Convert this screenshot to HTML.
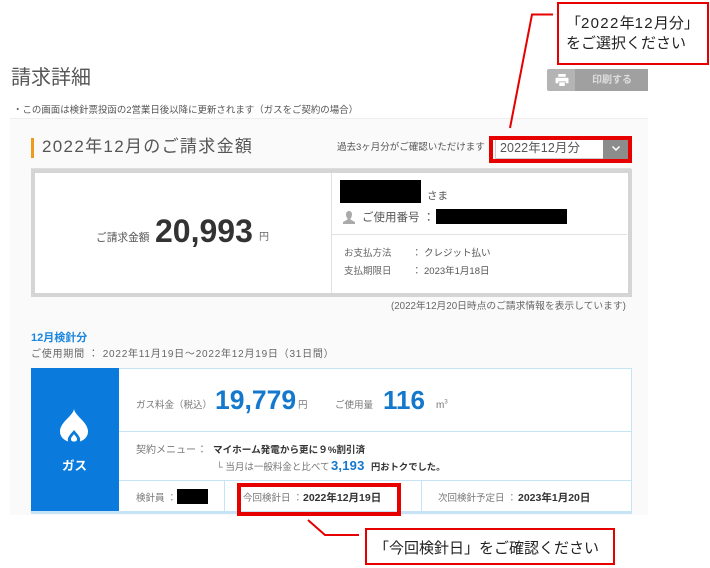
<!DOCTYPE html>
<html lang="ja"><head><meta charset="utf-8">
<style>
html,body{margin:0;padding:0;background:#fff}
#p{position:relative;width:710px;height:568px;overflow:hidden;background:#fff;font-family:"Liberation Sans","Noto Sans CJK JP",sans-serif;color:#666;filter:blur(.35px)}
#p div{position:absolute}
.t{position:absolute;white-space:nowrap;line-height:1}
.b{font-weight:bold;color:#333}
.blue{color:#1478cc;font-weight:bold}
.k{background:#000}
.r{border:4px solid #e60000;box-sizing:border-box}
.c{background:#fff;border:2px solid #e60000;box-sizing:border-box}
.lb{background:#c6e3f8}
</style></head><body><div id="p">
<div class="t" style="left:11px;top:68px;font-size:20px;color:#555">請求詳細</div>
<div class="t" style="left:13px;top:106px;font-size:9.450px;color:#555">・この画面は検針票投函の2営業日後以降に更新されます（ガスをご契約の場合）</div>

<div style="left:547px;top:69px;width:28px;height:22px;background:#b4b4b4;border-radius:2px 0 0 2px"></div>
<div style="left:575px;top:69px;width:73px;height:22px;background:#a0a0a0"></div>
<svg style="position:absolute;left:555px;top:74px" width="14" height="12" viewBox="0 0 14 13"><path fill="#fff" d="M3 0h8v3H3zM1 4h12a1 1 0 0 1 1 1v5h-3V8H3v2H0V5a1 1 0 0 1 1-1zM4 9h6v4H4z"/></svg>
<div class="t" style="left:592px;top:76px;font-size:10px;font-weight:bold;color:#ddd">印刷する</div>

<div style="left:10px;top:118px;width:638px;height:397px;background:#fafafa;border-top:1px solid #eee;box-sizing:border-box"></div>
<div style="left:31px;top:138px;width:3px;height:20px;background:#ee9a1c"></div>
<div class="t" style="left:42px;top:138px;font-size:17px;color:#555;letter-spacing:1.32px">2022年12月のご請求金額</div>
<div style="left:31px;top:168px;width:600px;height:1px;background:#ddd"></div>
<div class="t" style="left:337px;top:143px;font-size:9.500px;color:#555">過去3ヶ月分がご確認いただけます</div>

<div style="left:495px;top:139px;width:133px;height:20px;background:#fff;border:1px solid #ccc;box-sizing:border-box"></div>
<div style="left:603px;top:139px;width:25px;height:20px;background:#8c8c8c"></div>
<svg style="position:absolute;left:611px;top:145px" width="10" height="8" viewBox="0 0 10 8"><path fill="none" stroke="#fff" stroke-width="1.5" d="M1.500 1.500L5 5l3.500-3.500"/></svg>
<div class="t" style="left:500px;top:142px;font-size:12.500px;color:#555;letter-spacing:.1px">2022年12月分</div>

<div style="left:31px;top:169px;width:601px;height:128px;background:#fff;border:4px solid #d5d5d5;box-sizing:border-box"></div>
<div style="left:331px;top:173px;width:1px;height:120px;background:#e2e2e2"></div>
<div style="left:331px;top:234px;width:296px;height:1px;background:#e2e2e2"></div>
<div class="t" style="left:96px;top:233px;font-size:10.700px;color:#555">ご請求金額</div>
<div class="t" style="left:155px;top:215px;font-size:32px;font-weight:bold;color:#333">20,993</div>
<div class="t" style="left:259px;top:233px;font-size:10px;color:#666">円</div>

<div class="k" style="left:340px;top:180px;width:81px;height:23px"></div>
<div class="t" style="left:427px;top:191px;font-size:10.500px;color:#555">さま</div>
<svg style="position:absolute;left:343px;top:211px" width="12" height="13" viewBox="0 0 12 13"><path fill="#aaa" d="M6 0c2 0 3 1.500 3 3.500S8 7 7.500 7.500v1L12 11v2H0v-2l4.500-2.500v-1C4 7 3 5.500 3 3.500S4 0 6 0z"/></svg>
<div class="t" style="left:362px;top:213px;font-size:11.500px;color:#555">ご使用番号</div>
<div class="t" style="left:423px;top:213px;font-size:11.500px;color:#555">：</div>
<div class="k" style="left:436px;top:209px;width:131px;height:15px"></div>
<div class="t" style="left:344px;top:249px;font-size:9.500px;color:#666">お支払方法</div>
<div class="t" style="left:412px;top:249px;font-size:9.500px;color:#555">：</div>
<div class="t" style="left:424px;top:249px;font-size:9.500px;color:#555">クレジット払い</div>
<div class="t" style="left:344px;top:267px;font-size:9.500px;color:#666">支払期限日</div>
<div class="t" style="left:412px;top:267px;font-size:9.500px;color:#555">：</div>
<div class="t" style="left:424px;top:267px;font-size:9.500px;color:#555">2023年1月18日</div>
<div class="t" style="left:391px;top:302px;font-size:9.750px;color:#666">(2022年12月20日時点のご請求情報を表示しています)</div>

<div class="t" style="left:31px;top:333px;font-size:11px;font-weight:bold;color:#1a86e0">12月検針分</div>
<div class="t" style="left:31px;top:350px;font-size:10px;color:#666;letter-spacing:.77px">ご使用期間 ： 2022年11月19日～2022年12月19日（31日間）</div>

<div style="left:31px;top:368px;width:601px;height:146px;background:#fff;border:1px solid #c6e3f8;border-bottom:3px solid #c6e3f8;box-sizing:border-box"></div>
<div style="left:31px;top:368px;width:88px;height:143px;background:#0a7bdc"></div>
<div class="lb" style="left:119px;top:431px;width:513px;height:1px"></div>
<div class="lb" style="left:119px;top:480px;width:513px;height:1px"></div>
<div class="lb" style="left:224px;top:480px;width:1px;height:31px"></div>
<div class="lb" style="left:421px;top:480px;width:1px;height:31px"></div>
<svg style="position:absolute;left:60px;top:409px" width="28" height="33" viewBox="0 0 28 33"><path fill="#fff" d="M14 0C15 7 28 13 28 22.500C28 28 24 31 20 32.500C21 28 18 26 14 21C10 26 7 28 8 32.500C4 31 0 28 0 22.500C0 13 13 7 14 0Z"/><path fill="#fff" d="M14 25c1 2 3 3 3 5 0 2-1 2.500-3 2.500s-3-.5-3-2.500c0-2 2-3 3-5z"/></svg>
<div class="t" style="left:62px;top:460px;font-size:12.500px;font-weight:bold;color:#fff">ガス</div>

<div class="t" style="left:136px;top:401px;font-size:9.500px;color:#777">ガス料金（税込）</div>
<div class="t blue" style="left:215px;top:387px;font-size:26.500px">19,779</div>
<div class="t" style="left:298px;top:401px;font-size:9.500px;color:#777">円</div>
<div class="t" style="left:335px;top:401px;font-size:9.500px;color:#777">ご使用量</div>
<div class="t blue" style="left:383px;top:387px;font-size:26px">116</div>
<div class="t" style="left:436px;top:401px;font-size:10px;color:#777">m<sup style="font-size:6px;line-height:0">3</sup></div>

<div class="t" style="left:136px;top:446px;font-size:10px;color:#777">契約メニュー</div>
<div class="t" style="left:197px;top:446px;font-size:10px;color:#777">：</div>
<div class="t b" style="left:213px;top:446px;font-size:9.600px">マイホーム発電から更に９%割引済</div>
<div class="t" style="left:216px;top:463px;font-size:9.500px;color:#777">└ 当月は一般料金と比べて</div>
<div class="t blue" style="left:331px;top:459px;font-size:13px;letter-spacing:.2px">3,193</div>
<div class="t b" style="left:371px;top:463px;font-size:9.300px">円おトクでした。</div>

<div class="t" style="left:136px;top:494px;font-size:9.500px;color:#777">検針員 ：</div>
<div class="k" style="left:177px;top:489px;width:31px;height:15px"></div>
<div class="t" style="left:243px;top:494px;font-size:9.500px;color:#777">今回検針日 ：</div>
<div class="t b" style="left:303px;top:493px;font-size:10.500px">2022年12月19日</div>
<div class="t" style="left:438px;top:494px;font-size:9.500px;color:#777">次回検針予定日 ：</div>
<div class="t b" style="left:518px;top:493px;font-size:10.500px">2023年1月20日</div>

<div class="r" style="left:489px;top:136px;width:143px;height:27px"></div>
<div class="r" style="left:237px;top:483px;width:164px;height:33px"></div>
<svg style="position:absolute;left:0;top:0" width="710" height="568"><path fill="none" stroke="#e60000" stroke-width="2" d="M553 14.500H532L510 128M308 520L325 535H359"/></svg>
<div class="c" style="left:557px;top:2px;width:152px;height:63px"></div>
<div class="t" style="left:566px;top:16px;font-size:15px;color:#222">「<span style="letter-spacing:1.3px">2022</span>年<span style="letter-spacing:1.3px">12</span>月分」</div>
<div class="t" style="left:566px;top:36px;font-size:15px;color:#222">をご選択ください</div>
<div class="c" style="left:365px;top:528px;width:250px;height:37px"></div>
<div class="t" style="left:374px;top:541px;font-size:15px;color:#222">「今回検針日」をご確認ください</div>
</div></body></html>
